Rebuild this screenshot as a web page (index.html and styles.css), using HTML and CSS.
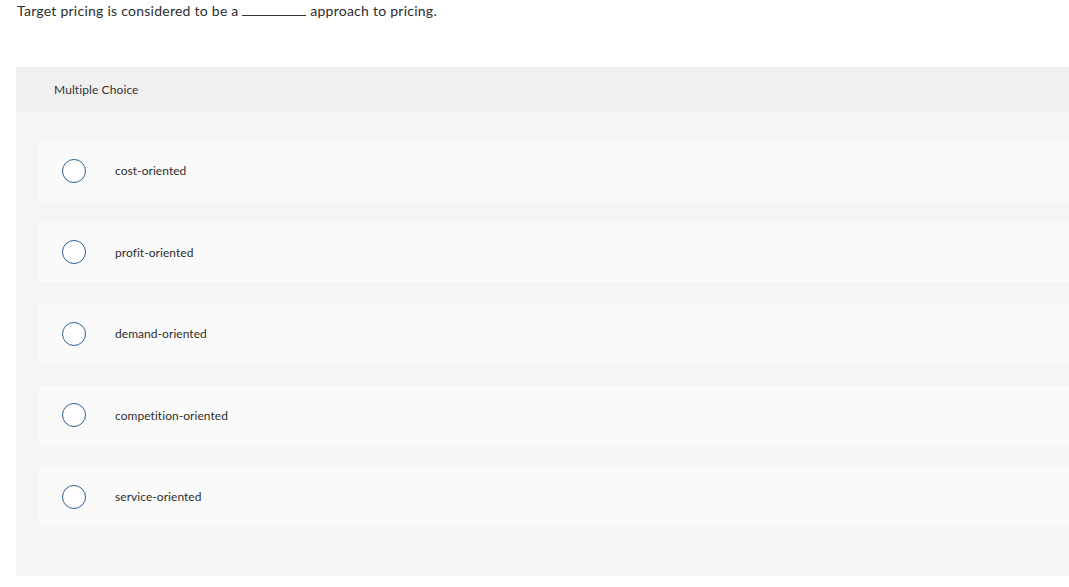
FILE: index.html
```html
<!DOCTYPE html>
<html>
<head>
<meta charset="utf-8">
<link rel="stylesheet" href="styles.css">
</head>
<body>
<p class="question">Target pricing is considered to be a <span class="blank"></span> approach to pricing.</p>
<div class="panel">
  <div class="panel-head">Multiple Choice</div>
  <div class="choices">
    <div class="choice"><span class="radio"></span><span class="label">cost-oriented</span></div>
    <div class="choice"><span class="radio"></span><span class="label">profit-oriented</span></div>
    <div class="choice"><span class="radio"></span><span class="label">demand-oriented</span></div>
    <div class="choice"><span class="radio"></span><span class="label">competition-oriented</span></div>
    <div class="choice"><span class="radio"></span><span class="label">service-oriented</span></div>
  </div>
</div>
</body>
</html>
```
FILE: styles.css
```css
html, body {
  margin: 0;
  padding: 0;
  background: #fff;
  font-family: "Lato", "Liberation Sans", sans-serif;
  color: #2d2d2d;
  overflow: hidden;
}
.question {
  margin: 0;
  padding: 2px 0 0 17px;
  font-size: 14px;
  letter-spacing: 0.25px;
  line-height: 17px;
  height: 64px;
  box-sizing: border-box;
}
.blank {
  display: inline-block;
  width: 64px;
  border-bottom: 1px solid #333;
  vertical-align: baseline;
}
.panel {
  margin-left: 16px;
  margin-right: -10px;
  margin-top: 3px;
  background: #f5f5f5;
  height: 509px;
}
.panel-head {
  background: #f0f0f0;
  height: 45px;
  padding-left: 38px;
  display: flex;
  align-items: center;
  font-size: 12px;
  letter-spacing: 0.1px;
  color: #333;
}
.choices {
  padding: 29px 0 0 23px;
  display: flex;
  flex-direction: column;
  gap: 22px;
}
.choice {
  background: #fafafa;
  height: 59.5px;
  display: flex;
  align-items: center;
  border-radius: 2px 0 0 2px;
}
.radio {
  width: 22px;
  height: 22px;
  border: 1.6px solid #2b5f93;
  border-radius: 50%;
  margin-left: 23px;
  background: #fff;
  flex: none;
}
.label {
  margin-left: 29px;
  font-size: 12px;
  letter-spacing: 0.05px;
  color: #2d2d2d;
}
```
